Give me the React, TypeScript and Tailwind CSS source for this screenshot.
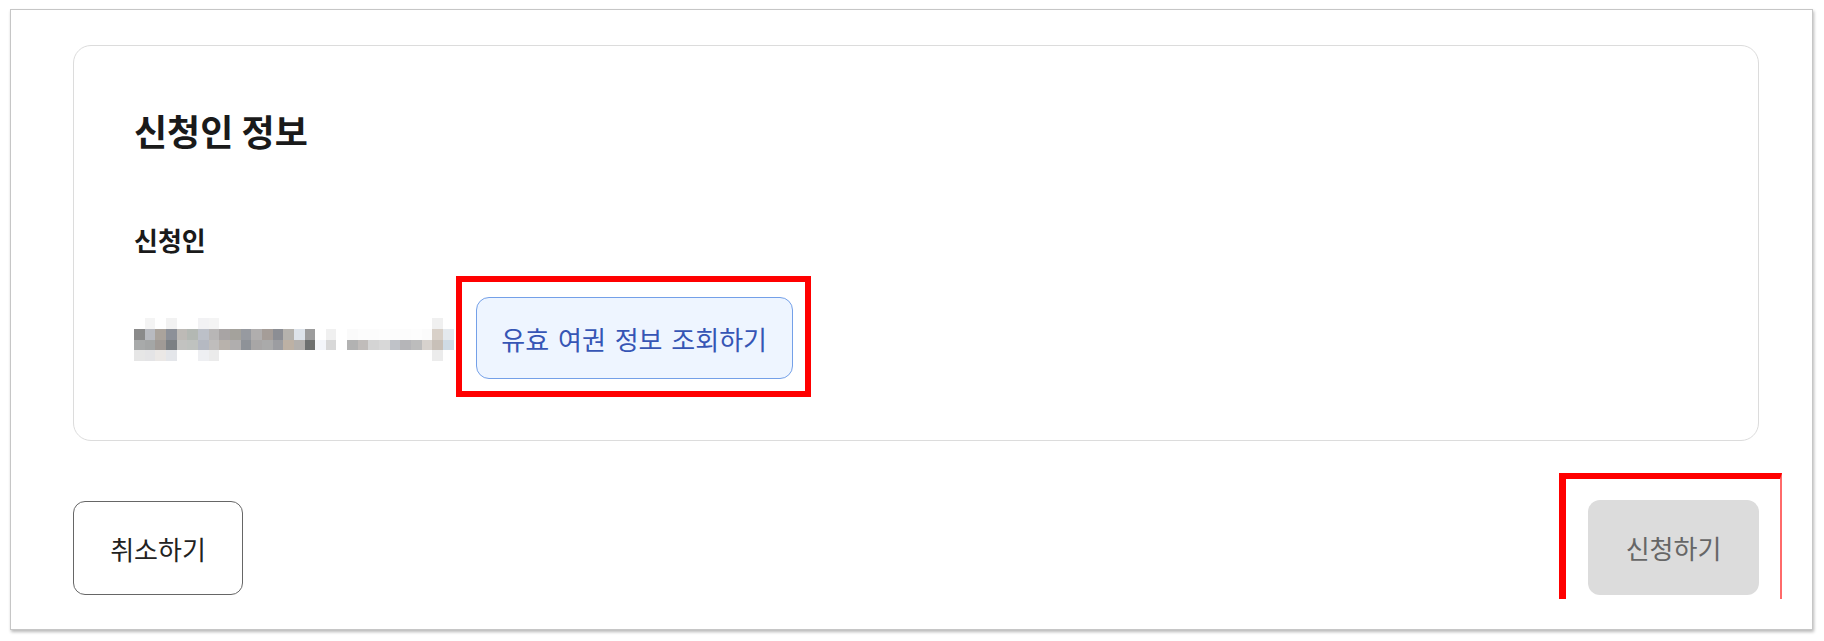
import React from "react";

const W = "#ffffff";
const mosaic: string[][] = [
  [W, "#f4f4f4", W, "#f2f2f2", W, W, "#f2f2f4", "#f4f4f4", W, W, W, W, W, W, W, W, W, W, W, W, W, W, W, W, W, W, W, W, "#f0f0f0", W],
  ["#8a8a8a", "#b8bac0", "#aaa39c", "#8c9098", "#bdbab6", "#b3b8b3", "#bcc0c8", "#b8b6b6", "#a8a4a4", "#a4a29c", "#979aa0", "#b0aeae", "#a59d98", "#8c8e94", "#b5b2ad", "#dde3ea", "#9c9c9c", W, "#f0f0f0", W, "#fafafa", "#fcfcfc", "#fcfcfc", "#fdfdfd", "#fcfcfc", "#fcfcfc", "#fdfdfd", "#fbfbfb", "#d8d0c8", "#e4e9ee"],
  ["#a8aaaa", "#a4a6a6", "#a09a96", "#7c8084", "#c2c2c0", "#bfc2bf", "#b5b9c2", "#bfbdbc", "#b8b2ac", "#b0aeae", "#8e9298", "#a8a6a6", "#aaaaaa", "#9c9da1", "#bdb1a4", "#b3b0ad", "#6e706f", "#f4f6fa", "#d8d8d8", W, "#b2b2b2", "#c0bcba", "#d4d4d4", "#d8d8d8", "#bfc2c8", "#b5b5b8", "#bcbcbc", "#d7d2cd", "#c8c0b8", "#cfdbe5"],
  ["#e6e6e6", "#e4e4e6", "#ebe8e6", "#e4e6ea", W, W, "#eeeff2", "#ebebeb", W, W, W, W, W, W, W, W, W, W, W, W, W, W, W, W, W, W, W, W, "#ececec", W],
];

export default function App() {
  return (
    <div
      className="w-[1824px] h-[641px] bg-white pl-[10px] pt-[9px] overflow-hidden"
      style={{ fontFamily: '"Noto Sans CJK KR", "Noto Sans", sans-serif' }}
    >
      <div className="w-[1803px] h-[621px] border border-[#c6c6c6] bg-white shadow-[1px_2px_3px_rgba(0,0,0,0.28)] pl-[62px] pt-[35px]">
        <div className="w-[1686px]">
          {/* Card */}
          <div className="h-[396px] rounded-[18px] border border-[#dcdcdc] pl-[60px] pt-[64px]">
            <h2 className="h-[40px] leading-[40px] text-[36px] font-bold text-[#1a1a1a]">
              신청인 정보
            </h2>
            <div className="mt-[74px] h-[32px] leading-[32px] text-[26px] font-bold text-[#1a1a1a]">
              신청인
            </div>
            <div className="mt-[41px] flex items-center">
              <div className="grid grid-cols-[repeat(30,10.667px)] grid-rows-[repeat(4,10.75px)] blur-[0.6px] mt-[3px]">
                {mosaic.flatMap((row, r) =>
                  row.map((c, i) => (
                    <div key={`${r}-${i}`} style={{ backgroundColor: c }} />
                  ))
                )}
              </div>
              <div className="relative ml-[22px]">
                <button className="w-[317px] h-[82px] rounded-[13px] border border-[#74a0e8] bg-[#eef5ff] text-[26px] [word-spacing:3px] text-[#3655b5] flex items-center justify-center">
                  유효 여권 정보 조회하기
                </button>
                <span className="pointer-events-none absolute -left-[20px] -top-[21px] -right-[18px] -bottom-[18px] border-[6px] border-[#ff0000]" />
              </div>
            </div>
          </div>

          {/* Bottom buttons */}
          <div className="mt-[59px] flex items-start justify-between">
            <button className="mt-[1px] w-[170px] h-[94px] rounded-[12px] border border-[#666666] bg-white text-[26px] text-[#222222] flex items-center justify-center">
              취소하기
            </button>
            <div className="relative">
              <button className="w-[171px] h-[95px] rounded-[12px] bg-[#dcdcdc] text-[26px] text-[#666666] flex items-center justify-center">
                신청하기
              </button>
              <span className="pointer-events-none absolute -left-[29px] -top-[27px] -right-[23px] -bottom-[4px] border-l-[7px] border-t-[6px] border-r-[2px] border-l-[#ff0000] border-t-[#ff0000] border-r-[#ff6a6a]" />
            </div>
          </div>
        </div>
      </div>
    </div>
  );
}
